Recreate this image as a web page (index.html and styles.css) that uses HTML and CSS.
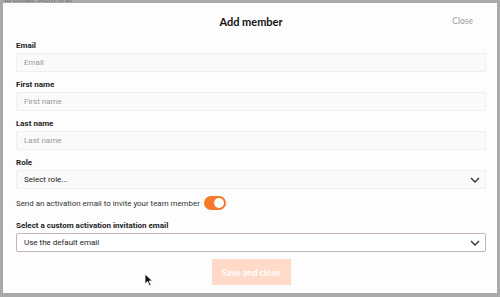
FILE: index.html
```html
<!DOCTYPE html>
<html lang="en">
<head>
  <meta charset="UTF-8" />
  <title>Add member</title>
  <link rel="stylesheet" href="styles.css">
</head>
<body>

  <div class="backdrop-text"><span>to create them first</span></div>

  <div class="modal">
    <div class="modal-header">
      <h2>Add member</h2>
      <button class="close-btn">Close</button>
    </div>

    <form class="member-form">
      <div class="field">
        <label for="email">Email</label>
        <input type="text" id="email" placeholder="Email">
      </div>

      <div class="field">
        <label for="first-name">First name</label>
        <input type="text" id="first-name" placeholder="First name">
      </div>

      <div class="field">
        <label for="last-name">Last name</label>
        <input type="text" id="last-name" placeholder="Last name">
      </div>

      <div class="field">
        <label>Role</label>
        <div class="select">
          <span>Select role...</span>
          <svg width="10" height="6" viewBox="0 0 10 6"><path d="M1 1l4 4 4-4" fill="none" stroke="#333" stroke-width="1.4"/></svg>
        </div>
      </div>

      <div class="toggle-row">
        <span>Send an activation email to invite your team member</span>
        <span class="toggle"><span class="knob"></span></span>
      </div>

      <div class="field">
        <label>Select a custom activation invitation email</label>
        <div class="select select-outlined">
          <span>Use the default email</span>
          <svg width="10" height="6" viewBox="0 0 10 6"><path d="M1 1l4 4 4-4" fill="none" stroke="#333" stroke-width="1.4"/></svg>
        </div>
      </div>

      <div class="actions">
        <button type="button" class="save-btn">Save and close</button>
      </div>
    </form>

    <svg class="cursor" width="10" height="14" viewBox="0 0 10 14">
      <path d="M1 1v10l2.5-2.4 2 4.4 1.6-.7-2-4.3H8.5z" fill="#111" stroke="#fff" stroke-width="0.8"/>
    </svg>
  </div>

</body>
</html>
```

FILE: styles.css
```css
* {
  box-sizing: border-box;
  margin: 0;
  padding: 0;
}

body {
  font-family: 'Roboto', 'Liberation Sans', sans-serif;
  background: #a9a9a9;
  color: #222;
  width: 500px;
  height: 297px;
  overflow: hidden;
}

/* page text peeking out above the modal */
.backdrop-text {
  height: 3px;
  overflow: hidden;
  padding-left: 4px;
  font-size: 8px;
  line-height: 9px;
  color: #6c6c6c;
}

.backdrop-text span {
  display: block;
  margin-top: -5px;
}

.modal {
  position: relative;
  margin-left: 3px;
  width: 494px;
  height: 290px;
  background: #fdfdfd;
  padding: 0 11px 0 13px;
}

.modal-header {
  height: 37px;
  display: flex;
  align-items: center;
  justify-content: center;
  position: relative;
}

.modal-header h2 {
  font-family: 'Lato', sans-serif;
  font-size: 11px;
  font-weight: 700;
  color: #111;
}

.close-btn {
  position: absolute;
  right: 13px;
  top: 13px;
  border: none;
  background: none;
  font-family: 'Lato', sans-serif;
  font-size: 8.5px;
  color: #9a9a9a;
}

.member-form {
  display: flex;
  flex-direction: column;
}

.field {
  display: flex;
  flex-direction: column;
  margin-bottom: 7px;
}

.field label {
  font-size: 8px;
  font-weight: 700;
  line-height: 12px;
  color: #222;
  margin-bottom: 1px;
}

.field input,
.select {
  height: 19px;
  border: 1px solid #efefef;
  border-radius: 2px;
  background: #fafafa;
  padding: 0 7px;
  font-family: inherit;
  font-size: 8px;
  color: #222;
}

.field input::placeholder {
  color: #999;
}

.select {
  display: flex;
  align-items: center;
  justify-content: space-between;
  padding-right: 5px;
}

.select-outlined {
  background: #fff;
  border-color: #c4b3bb;
}

.toggle-row {
  display: flex;
  align-items: center;
  gap: 4px;
  font-size: 7.9px;
  color: #333;
  margin: 0 0 10px;
}

.toggle {
  width: 22px;
  height: 14px;
  border-radius: 7px;
  background: #f5792a;
  display: flex;
  justify-content: flex-end;
  align-items: center;
  padding: 2px;
}

.knob {
  width: 10px;
  height: 10px;
  border-radius: 50%;
  background: #fff;
}

.actions {
  display: flex;
  justify-content: center;
}

.save-btn {
  width: 79px;
  height: 26px;
  border: none;
  background: #ffdac8;
  color: #fff;
  font-family: 'Lato', sans-serif;
  font-size: 9px;
  font-weight: 700;
}

.cursor {
  position: absolute;
  left: 141px;
  top: 270px;
}
```
